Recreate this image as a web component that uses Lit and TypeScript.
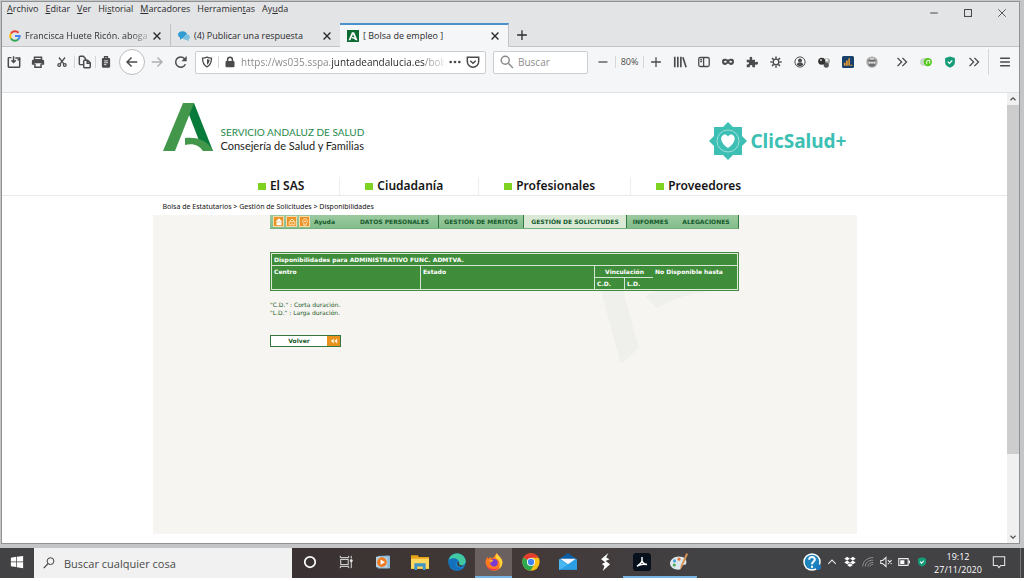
import { LitElement, html, css, svg } from "lit";
import { customElement } from "lit/decorators.js";
import { classMap } from "lit/directives/class-map.js";

const glyphs: Record<string, unknown> = {
  open: svg`<path d="M5 3H2.500a1 1 0 0 0-1 1v9a1 1 0 0 0 1 1h11a1 1 0 0 0 1-1V5.500H12" /><path d="M9.500 3.500h5v2M7.500 1.500V8M5 6l2.500 2.500L10 6" />`,
  print: svg`<path d="M4 2.500h8v3H4z" fill="none"/><path d="M2.500 5.500h11a1.500 1.500 0 0 1 1.500 1.500v4h-3v-1.500H4V11H1V7a1.500 1.500 0 0 1 1.500-1.500z" fill="currentColor" stroke="none"/><path d="M4.500 10v4h7v-4" />`,
  cut: svg`<path d="M4 2l6.500 8.500M12 2L5.500 10.500"/><circle cx="4.300" cy="12" r="1.800"/><circle cx="11.700" cy="12" r="1.800"/>`,
  copy: svg`<path d="M6 11H2.500a1 1 0 0 1-1-1V2.500a1 1 0 0 1 1-1H6l2.500 2.500v2"/><path d="M7.500 6h3.500l3 3v4.500a1 1 0 0 1-1 1H7.500a1 1 0 0 1-1-1V7a1 1 0 0 1 1-1zM10.500 6v3.500H14"/>`,
  paste: svg`<rect x="2.500" y="2.500" width="11" height="13" rx="1.500" fill="currentColor" stroke="none"/><path d="M6 3V1h4v2"/><path d="M5.500 6.500h5M5.500 9h5M5.500 11.500h3" stroke="#f5f6f7" stroke-width="1.200"/>`,
  back: svg`<path d="M14 8H2.500M7.500 2.800L2.300 8l5.200 5.200"/>`,
  forward: svg`<path d="M2 8h11.500M8.500 2.800L13.700 8l-5.200 5.200"/>`,
  reload: svg`<path d="M13 10.500A5.800 5.800 0 1 1 12 4.200"/><path d="M14.500 1v6h-6z" fill="currentColor" stroke="none"/>`,
  shield: svg`<path d="M8 1.500c2 1 4 1.300 6 1.300 0 5.700-1.500 9.700-6 11.700C3.500 12.500 2 8.500 2 2.800c2 0 4-.3 6-1.300z"/><path d="M8 4c1.200.6 2.300.9 3.500 1-.2 3-1 5-3.500 6.500z" fill="currentColor" stroke="none"/>`,
  lock: svg`<path d="M4.800 7V4.800a3.200 3.200 0 0 1 6.400 0V7" stroke-width="2"/><rect x="2" y="6.500" width="12" height="8.500" rx="1.500" fill="currentColor" stroke="none"/>`,
  dots: svg`<g fill="currentColor" stroke="none"><circle cx="2.200" cy="8" r="1.800"/><circle cx="8" cy="8" r="1.800"/><circle cx="13.800" cy="8" r="1.800"/></g>`,
  pocket: svg`<path d="M1.500 2.500h13v5a6.500 6.500 0 0 1-13 0z"/><path d="M4.800 6.500L8 9.500l3.200-3"/>`,
  search: svg`<circle cx="6" cy="6" r="4.600"/><path d="M9.500 9.500l5.300 5.300"/>`,
  minus: svg`<path d="M2 8h12"/>`,
  plus: svg`<path d="M1.500 8h13M8 1.500v13"/>`,
  library: svg`<path d="M2 2v12M5.500 2v12M9 2v12M11.300 2.500l3.700 11.500" stroke-width="1.900"/>`,
  sidebar: svg`<rect x="1" y="2" width="14" height="12" rx="2"/><path d="M7.500 2v12M3 5h2.500M3 7.500h2.500"/>`,
  mask: svg`<path fill-rule="evenodd" d="M0 7c0-3 2-3.500 4-3.500 2 0 2.500 1 4 1s2-1 4-1 4 .5 4 3.500c0 3.500-1.500 5-4 5-2 0-2.800-2-4-2s-2 2-4 2c-2.500 0-4-1.500-4-5zm2.300.7c1.200 1.600 3 1.600 4.200 0C5.500 6 3.500 6 2.300 7.700zm7.200 0c1.200 1.600 3 1.600 4.200 0C12.700 6 10.500 6 9.500 7.700z" fill="currentColor" stroke="none"/>`,
  puzzle: svg`<path d="M1 5h4.500C4 2.500 5 1 6.500 1S9 2.500 7.800 5H12v3.500c2-1.300 4-.7 4 1.200s-2 2.500-4 1.200V15H8.300c.8-2-.3-3-1.500-3s-2.300 1-1.500 3H1v-4c2 .7 3-.2 3-1.300S3 7.700 1 8.500z" fill="currentColor" stroke="none"/>`,
  gear: svg`<circle cx="8" cy="8" r="3.700"/><path d="M8 .5v3M8 12.500v3M.5 8h3M12.500 8h3M2.700 2.700l2.100 2.100M11.200 11.200l2.100 2.100M2.700 13.300l2.100-2.100M11.200 4.800l2.100-2.100" stroke-width="2"/>`,
  account: svg`<circle cx="8" cy="8" r="6.800" stroke-width="1.300"/><circle cx="8" cy="6" r="2.600" fill="currentColor" stroke="none"/><path d="M3.500 12c.5-2.500 2.200-3.200 4.500-3.200s4 .7 4.500 3.200c-3 2-6 2-9 0z" fill="currentColor" stroke="none"/>`,
  pearls: svg`<g stroke="none"><circle cx="12" cy="7" r="4" fill="#a9a9a9"/><circle cx="11" cy="12" r="3.500" fill="#555"/><circle cx="11.500" cy="5.500" r="1.700" fill="#f4f4f4"/><circle cx="5" cy="7" r="4.700" fill="#303030"/><circle cx="4" cy="5.500" r="1.400" fill="#bbb"/></g>`,
  chart: svg`<g stroke="none"><rect width="16" height="16" rx="2" fill="#17406b"/><path d="M2.500 9h2.200v4H2.500zM5.500 6h2.200v7H5.500zM8.500 3h2v10h-2zM11.300 11.500h2.500V13h-2.500z" fill="#f0a030"/></g>`,
  globe: svg`<g stroke="none"><circle cx="8" cy="8" r="7.500" fill="#a5a5a5"/><path d="M2 6q6-5 12 0-2 2-6 1-4 1-6-1zM3 12l2-2h6l2 2-3 2H6z" fill="#707070"/><path d="M4 8h2v2H4zM7 8h2v2H7zM10 8h2v2h-2zM5 3h6v1.500H5z" fill="#ececec"/></g>`,
  chevrons: svg`<path d="M2 2.500L7.500 8 2 13.500M8.500 2.500L14 8l-5.500 5.500" stroke-width="1.800"/>`,
  toggle: svg`<g stroke="none"><rect x="0" y="3" width="15" height="10" rx="5" fill="#c9d6c5"/><circle cx="10.500" cy="8" r="5.500" fill="#55c81c"/><path d="M9 11V6.500l4-1v4.500" stroke="#fff" stroke-width="1.300"/></g>`,
  guard: svg`<path d="M8 .5l6.500 2v6c0 3.500-3 5.500-6.500 7-3.500-1.500-6.500-3.500-6.500-7v-6z" fill="#169b78" stroke="none"/><path d="M5 7.500l2.300 2.300L11 6" stroke="#fff"/>`,
  burger: svg`<path d="M1.500 3h13M1.500 8h13M1.500 13h13" stroke-width="1.900"/>`,
  close: svg`<path d="M2.500 2.500l11 11M13.500 2.500l-11 11" stroke-width="2.200"/>`,
  winMin: svg`<path d="M2 8h12" stroke-width="1.500"/>`,
  winMax: svg`<rect x="2.500" y="2.500" width="11" height="11" stroke-width="1.500"/>`,
  winClose: svg`<path d="M2 2l12 12M14 2L2 14" stroke-width="1.300"/>`,
  google: svg`<g stroke-width="2.600"><path d="M12.700 3.700A6.300 6.300 0 0 0 2.600 4.800" stroke="#ea4335"/><path d="M2.600 4.800a6.300 6.300 0 0 0 0 6.400" stroke="#fbbc05"/><path d="M2.600 11.200a6.300 6.300 0 0 0 9.600 1.600" stroke="#34a853"/><path d="M12.200 12.800A6.300 6.300 0 0 0 14.300 8H8" stroke="#4285f4"/></g>`,
  chat: svg`<g stroke="none"><path d="M6 1.500c3.500 0 6 2 6 4.700S9.500 11 6 11l-3.500 2 .3-3C1 9 0 7.800 0 6.200 0 3.500 2.500 1.500 6 1.500z" fill="#2f9bd0"/><path d="M11 5.500c3 0 5 1.700 5 4 0 1.300-.7 2.300-2 3l.5 2.500-3-1.600c-2.500.1-4.500-1.200-5-3z" fill="#7cc0e0"/></g>`,
  junta: svg`<rect width="16" height="16" fill="#0b6b30" stroke="none"/><path d="M2 13.500L6.500 3h3L14 13.500h-2.500L8 5.500l-3.500 8z" fill="#fff" stroke="none"/><path d="M6.500 10c2 0 4 .8 5.500 3" stroke="#fff"/>`,
  windows: svg`<path d="M1 3l6-.9v5.400H1zM7.800 2L15 1v6.500H7.800zM1 8.300h6v5.500l-6-.9zM7.800 8.300H15V15l-7.200-1z" fill="#fff" stroke="none"/>`,
  lens: svg`<circle cx="10" cy="5.500" r="4.500" stroke-width="1.300"/><path d="M6.700 8.800L1 14.700" stroke-width="1.500"/>`,
  cortana: svg`<circle cx="8" cy="8" r="6" stroke="#fff" stroke-width="2"/>`,
  tasks: svg`<g stroke="#e5e5e5" stroke-width="1.100"><rect x="2" y="5" width="8.500" height="6"/><path d="M1.500 1v2h9.500V1M1.500 15v-2H11v2M14 1v3M14 8v7"/><path d="M13 5.500h2v2h-2z" fill="#fff"/></g>`,
  media: svg`<g stroke="none"><path d="M2 1l13-.5 1 1V15l-2 .5H2z" fill="#8fbbd9"/><path d="M0 2l13 .5v12L0 14z" fill="#b9d2e2"/><circle cx="6.800" cy="8.200" r="5.500" fill="#ec7a23"/><path d="M5.300 5.200l5 3-5 3z" fill="#fff"/></g>`,
  folder: svg`<g stroke="none"><path d="M0 2h6l1 1.500h9V14H0z" fill="#e8a317"/><path d="M0 5h16v9H0z" fill="#ffd75e"/><path d="M3 9h10v6h-2.500v-3h-5v3H3z" fill="#3f94c5"/></g>`,
  edge: svg`<g stroke="none"><circle cx="8" cy="8" r="7.800" fill="#1687d0"/><path d="M1 6C2-1 14-2 15.700 7c.3 3-4 5-6 3.300C11 7 8 5 5.300 5.200 3.500 5.300 2 5.500 1 6z" fill="#42c9a0"/><path d="M1 6c3-2.500 8-1.500 8 1.500-3 .5-3 4.500 1 5.700 2 .5 3.500 0 4.500-.7C10 18-1 16 1 6z" fill="#1470bd"/><path d="M9.500 7.500c-2 .5-1.800 4 1.500 4.700 1.500.2 3-.3 4-1-1 .1-4.500 0-5.300-1.500.3-.7.300-1.500-.2-2.200z" fill="#403a3b"/></g>`,
  firefox: svg`<g stroke="none"><path d="M.5 8C.5 6 1.300 4.500 2.500 3.500L3 5l2-1.500 1 1.300C8 4.500 8.500 2 10.500 0c.3 2 5 4 5 8.500a7.500 7.500 0 0 1-15-.5z" fill="#ff7a20"/><path d="M10.500 0c.3 2 5 4 5 8.500 0 2-1 4.500-3 5.500C14 9 12.500 6 9 4z" fill="#ffd43b"/><path d="M1 10c2 5 8 5 10.500 3C9 17 2.500 16 1 10z" fill="#f0305b"/><circle cx="8" cy="8.700" r="3.300" fill="#7b3ad0"/><path d="M3.500 6l4 .5c-.5 1.300-2 1-2 2.200C5 8 4 7.500 3.500 6z" fill="#ffb02e"/></g>`,
  chrome: svg`<g stroke="none"><circle cx="8" cy="8" r="7.700" fill="#fbc116"/><path d="M8 8L1.300 4.200A7.700 7.700 0 0 1 14.700 4.200H8z" fill="#e33b2e"/><path d="M1.300 4.200A7.700 7.700 0 0 0 7.500 15.700L11 9.700 8 8z" fill="#2da94f"/><circle cx="8" cy="8" r="3.600" fill="#fff"/><circle cx="8" cy="8" r="2.800" fill="#4285f4"/></g>`,
  mail: svg`<g stroke="none"><path d="M0 5.500L8 0l8 5.500z" fill="#0f5fa8"/><path d="M0 5.500h16V15H0z" fill="#2a9fe4"/><path d="M1 5h14L8 10z" fill="#f4f8fb"/><path d="M0 5.500l8 5L0 15z" fill="#49b8f0"/></g>`,
  bolt: svg`<path d="M11 0L4.500 5.500l3.700 2.700-3 1.500 2.300 1.800L6 16l6.500-6-4-3 3.500-1.500L9 4z" fill="#fff" stroke="none"/>`,
  acrobat: svg`<rect width="16" height="16" rx="3" fill="#06111d" stroke="none"/><path d="M8 3.500v3.800M8 7.300c-1 2-2.500 3.200-4.500 4.500M8 7.300c1 2 2.500 2.700 4.500 3M4 11.500c2-1.300 5-2 8-1.200" stroke="#fff" stroke-width="1.300"/>`,
  paint: svg`<g stroke="none"><path d="M8 3c4.500 0 7 2.500 6.500 6-.4 2-3 1-4 2.300-.8 1.500 0 3.500-3 3.500C3.500 14.800 0 12.500 0 9.300 0 5.500 4 3 8 3z" fill="#dde8ee"/><circle cx="4" cy="7" r="1.400" fill="#4b9fd8"/><circle cx="8" cy="5.500" r="1.400" fill="#e5793b"/><circle cx="3.800" cy="10.700" r="1.400" fill="#51aa57"/><path d="M14.500 0l1.500 1-5 11-2 3 .5-4z" fill="#d49351"/></g>`,
  help: svg`<g stroke="none"><circle cx="8" cy="8" r="7.800" fill="#fff"/><circle cx="8" cy="8" r="6.500" fill="#1e84bd"/></g><path d="M5.500 6c0-3.500 5.200-3.200 5 0C10.300 7.700 8 7.600 8 10M8 11.300v1.700" stroke="#fff" stroke-width="1.800"/><circle cx="13.500" cy="12.500" r="2.500" fill="#1679bf" stroke="none"/>`,
  up: svg`<path d="M2 11l6-6 6 6" stroke="#e8e8e8"/>`,
  dropbox: svg`<path d="M4.200 1L8 3.500 4.200 6 .4 3.500zM11.800 1l3.800 2.500L11.800 6 8 3.500zM4.200 6L8 8.500 4.200 11 .4 8.500zM11.800 6l3.800 2.500-3.800 2.500L8 8.500zM4.200 12L8 9.500l3.800 2.500L8 14.500z" fill="#fff" stroke="none"/>`,
  wifi: svg`<g stroke="#9a9a9a" stroke-width="1.200"><path d="M1 14C1 7 7 2 15 2M4.500 14c0-5 4-8.500 10.500-8.500M8 14c0-3 3-5.500 7-5.500M11 14c0-2 2-3 4-3"/></g>`,
  mute: svg`<path d="M1 6h2.500L8 2v12l-4.500-4H1zM10.500 5.500l5 5M15.500 5.500l-5 5" stroke="#e8e8e8" stroke-width="1.400"/>`,
  battery: svg`<path d="M1 3.500h12.500v9H1z" stroke="#eee" stroke-width="1.400"/><path d="M3 5.500h5.500v5H3zM14 6h1.800v4H14z" fill="#fff" stroke="none"/>`,
  notice: svg`<path d="M1.500 2h13v10H10l-2 2.500L6 12H1.500z" stroke="#e8e8e8" stroke-width="1.200"/>`,
  home: svg`<path d="M8 2l5.500 5.500h-11zM4 8.500h8V13H4z" fill="#fff" stroke="none"/>`,
  padlock: svg`<path d="M3.500 7.500h9v5h-9zM5.500 7V5q2.500-3 5 0v2M8 9v2" stroke="#fff2dc" stroke-width="1.300"/>`,
  bulb: svg`<path d="M6 10C2.500 7 4.500 3 8 3s5.500 4 2 7v3H6zM7 6l1 2 1-2" stroke="#fff2dc" stroke-width="1.400"/>`,
  scrollUp: svg`<path d="M3 10.500l5-5 5 5" stroke-width="2.400"/>`,
  scrollDown: svg`<path d="M3 5.500l5 5 5-5" stroke-width="2.400"/>`,
  rewind: svg`<path d="M7.500 4v8L3 8zM13 4v8L8.500 8z" fill="#fff3dd" stroke="none"/>`,
};

const icon = (name: string, size = "s12") =>
  html`<svg class="icon ${size}" viewBox="0 0 16 16" aria-hidden="true">${glyphs[name]}</svg>`;

const iconStyles = css`
  * { box-sizing: border-box; }
  .icon { display: block; flex: none; fill: none; stroke: currentColor; stroke-width: 1.7; }
  .s8 { width: 8px; height: 8px; }
  .s10 { width: 10px; height: 10px; }
  .s12 { width: 12px; height: 12px; }
  .s14 { width: 14px; height: 14px; }
  .s18 { width: 18px; height: 18px; }
  button { font: inherit; color: inherit; background: none; border: 0; padding: 0; margin: 0; }
  input { font: inherit; border: 0; outline: 0; padding: 0; margin: 0; min-width: 0; background: none; }
`;

@customElement("browser-chrome")
class BrowserChrome extends LitElement {
  static styles = [iconStyles, css`
    :host { display: block; background: #e3e4e6; color: #2b2b2d; font: 10px/14px "Open Sans", "Noto Sans", sans-serif; }
    .top { display: flex; justify-content: space-between; height: 21px; }
    .menus { display: flex; gap: 7px; padding-left: 5px; font-size: 9px; }
    .menus button { height: 14px; white-space: nowrap; }
    u { text-underline-offset: 1px; }
    .wins { display: flex; }
    .wins button { width: 34px; height: 21px; display: grid; place-items: center; color: #3a3a3a; }
    .tabs { display: flex; height: 24px; border-bottom: 1px solid #c4c4c6; }
    .tab { display: flex; align-items: center; flex: 0 1 169px; min-width: 0; padding: 0 8px 0 7px; gap: 4px; height: 24px; font-size: 9px; border-top: 2px solid transparent; }
    .first { border-right: 1px solid #c0c0c2; }
    .active { background: #f5f6f7; border-top-color: #4a90cc; border-right: 1px solid #c4c4c6; }
    .name { flex: 1; min-width: 0; white-space: nowrap; }
    .fade { background: linear-gradient(90deg, #2b2b2d 86%, #b9babc); -webkit-background-clip: text; background-clip: text; color: transparent; }
    .new { width: 26px; display: grid; place-items: center; }
    .bar { display: flex; align-items: center; height: 46px; padding: 0 2px 15px 0; background: #f5f6f7; border-bottom: 1px solid #e0e1e2; color: #4b4b4d; }
    .tool { width: 24px; height: 24px; flex: none; display: grid; place-items: center; }
    .narrow { width: 20px; }
    .sep { border-left: 1px solid #d5d6d8; height: 12px; flex: none; }
    .tall { height: 26px; margin: 0 4px 0 2px; }
    .round { width: 26px; height: 26px; border: 1px solid #bcbcbe; border-radius: 50%; background: #fff; margin: 0 0 0 3px; }
    .dim { color: #b0b0b2; }
    .box { display: flex; align-items: center; height: 23px; background: #fff; border: 1px solid #cccdcf; border-radius: 2px; }
    .url { flex: 1; min-width: 0; margin: 0 7px 0 2px; padding: 0 5px; gap: 5px; }
    .url input { flex: 1; height: 16px; -webkit-text-fill-color: transparent;
      background: linear-gradient(90deg, #858587 90px, #252527 90px 184px, #858587 184px, #ddd 204px);
      -webkit-background-clip: text; background-clip: text; }
    .find { width: 95px; padding: 0 6px; gap: 4px; margin-right: 3px; color: #8a8a8c; }
    .find input { flex: 1; }
    .find input::placeholder { color: #8d8d8f; opacity: 1; }
    .zoom { width: 27px; text-align: center; font-size: 9px; }
    .over { margin-left: 6px; }
  `];
  private menu(before: string, key: string, after: string) {
    return html`<button>${before}<u>${key}</u>${after}</button>`;
  }
  private tool(name: string, label: string, cls = "", size = "s12") {
    return html`<button class="tool ${cls}" aria-label=${label}>${icon(name, size)}</button>`;
  }
  private tab(glyph: string, name: string, kind: Record<string, boolean>) {
    return html`<div class=${classMap({ tab: true, ...kind })}>
      ${icon(glyph)}<span class=${classMap({ name: true, fade: !!kind.first })}>${name}</span>
      <button aria-label="Cerrar pestaña">${icon("close", "s10")}</button>
    </div>`;
  }
  render() {
    return html`
      <div class="top">
        <nav class="menus">
          ${this.menu("", "A", "rchivo")}${this.menu("", "E", "ditar")}${this.menu("", "V", "er")}
          ${this.menu("Hi", "s", "torial")}${this.menu("", "M", "arcadores")}
          ${this.menu("Herramien", "t", "as")}${this.menu("Ay", "u", "da")}
        </nav>
        <div class="wins">
          <button aria-label="Minimizar">${icon("winMin", "s10")}</button>
          <button aria-label="Maximizar">${icon("winMax", "s10")}</button>
          <button aria-label="Cerrar">${icon("winClose", "s10")}</button>
        </div>
      </div>
      <div class="tabs">
        ${this.tab("google", "Francisca Huete Ricón. abogad", { first: true })}
        ${this.tab("chat", "(4) Publicar una respuesta", {})}
        ${this.tab("junta", "[ Bolsa de empleo ]", { active: true })}
        <button class="new" aria-label="Nueva pestaña">${icon("plus")}</button>
      </div>
      <div class="bar">
        ${this.tool("open", "Abrir", "", "s14")}${this.tool("print", "Imprimir", "", "s14")}${this.tool("cut", "Cortar")}
        <span class="sep"></span>${this.tool("copy", "Copiar", "narrow", "s14")}
        <span class="sep"></span>${this.tool("paste", "Pegar", "narrow")}
        ${this.tool("back", "Atrás", "round", "s14")}${this.tool("forward", "Adelante", "dim", "s14")}${this.tool("reload", "Recargar", "", "s14")}
        <div class="box url">
          ${icon("shield")}<span class="sep"></span>${icon("lock")}
          <input aria-label="Dirección" value="https://ws035.sspa.juntadeandalucia.es/bols" />
          ${icon("dots", "s12")}${icon("pocket", "s14")}
        </div>
        <label class="box find">${icon("search", "s14")}<input aria-label="Buscar" placeholder="Buscar" /></label>
        ${this.tool("minus", "Reducir")}<span class="sep"></span><span class="zoom">80%</span><span class="sep"></span>${this.tool("plus", "Ampliar")}
        ${this.tool("library", "Catálogo", "", "s14")}${this.tool("sidebar", "Barra lateral")}${this.tool("mask", "Privado")}
        ${this.tool("puzzle", "Complementos")}${this.tool("gear", "Opciones")}${this.tool("account", "Cuenta")}
        ${this.tool("pearls", "Perlas")}${this.tool("chart", "Estadísticas")}${this.tool("globe", "Mundo")}
        ${this.tool("chevrons", "Más", "over")}${this.tool("toggle", "Activar")}${this.tool("guard", "Protección")}${this.tool("chevrons", "Más herramientas")}
        <span class="sep tall"></span>${this.tool("burger", "Menú")}
      </div>`;
  }
}

@customElement("health-page")
class HealthPage extends LitElement {
  static styles = [iconStyles, css`
    :host { display: flex; flex-direction: column; background: #fff; font-family: "Noto Sans", "Open Sans", sans-serif; color: #222; }
    .head { width: 100%; max-width: 704px; margin: 0 auto; padding: 10px 10px 0; height: 84px; display: flex; justify-content: space-between; align-items: flex-start; }
    .brand, .clic { display: flex; }
    .brand { gap: 8px; }
    .mark { width: 50px; height: 49px; }
    .words { padding-top: 22px; font: 11px/14px Lato, "Open Sans", sans-serif; }
    .service { color: #26894b; font-size: 10px; }
    .clic { align-items: center; gap: 3px; padding-top: 19px; color: #3dbfb4; font: bold 19px/38px "Noto Sans", sans-serif; text-decoration: none; }
    .star { width: 38px; height: 38px; }
    .sections { display: flex; justify-content: center; border-bottom: 1px solid #e9e9e9; height: 19px; }
    .sections a { display: flex; align-items: center; gap: 4px; padding: 0 35px 0 25px; color: #151515; text-decoration: none; font: 600 12px/16px "Noto Sans", sans-serif; border-right: 1px solid #eee; }
    .sections a:last-child { border-right: 0; }
    .sections a::before { content: ""; width: 8px; height: 7px; background: #7ed321; }
    .crumbs { width: 100%; max-width: 704px; margin: 0 auto; padding: 5px 10px 0; font-size: 7px; line-height: 12px; height: 19px; color: #111; }
    .panel { flex: 1; width: 100%; max-width: 704px; margin: 0 auto 9px; background: #f6f5f1; font: 6px/8px "DejaVu Sans", Verdana, sans-serif; color: #1d5a2a; }
    .inner { width: 469px; max-width: 100%; margin: 0 auto; }
    .menu { display: flex; height: 14px; background: linear-gradient(#9ccaa0, #83bd8b); border-bottom: 1px solid #74b07c; border-right: 1px solid #337a42; font-weight: bold; }
    .menu a { display: flex; align-items: center; justify-content: center; color: #155a2c; text-decoration: none; white-space: nowrap; }
    .quick { display: flex; align-items: center; gap: 2px; padding-left: 3px; width: 81px; }
    .quick a { padding-left: 2px; }
    .sq { width: 11px; height: 11px; display: grid; place-items: center; background: #ea9425; color: #fff; outline: 1px solid #f6d9a6; outline-offset: -1px; }
    .menu a.personal { width: 87px; }
    .menu a.merits { width: 85px; border-left: 1px solid #337a42; }
    .menu a.requests { width: 104px; background: #d9e9d6; border: 1px solid #337a42; border-width: 0 1px; }
    .menu a.reports { width: 47px; }
    .menu a.claims { flex: 1; }
    table { width: 100%; margin-top: 23px; border-collapse: separate; border-spacing: 0; table-layout: fixed; border: 1px solid #3f8a3b; background: #dcebd8; padding: 1px; color: #fff; }
    th { background: #3f8d3a; text-align: left; vertical-align: top; padding: 2px 1px 1px 2px; font-weight: bold; }
    th.title { border-bottom: 1px solid #d5e6d2; }
    th.edge { border-left: 1px solid #d5e6d2; }
    th.under { border-bottom: 1px solid #d5e6d2; text-align: center; }
    .c1 { width: 148px; } .c2 { width: 174px; } .c3 { width: 30px; } .c4 { width: 29px; }
    .foot { display: flex; justify-content: space-between; }
    .notes p { margin: 0; line-height: 8px; }
    .notes { padding-top: 10px; }
    .return { display: flex; width: 71px; height: 12px; margin-top: 18px; border: 1px solid #35763f; background: #fff; font-weight: bold; color: #1d5a2a; align-items: stretch; }
    .return span { flex: 1; line-height: 10px; text-align: center; }
    .return i { width: 13px; background: #e8921e; display: grid; place-items: center; }
    .shadow { width: 140px; height: 80px; }
  `];
  render() {
    return html`
      <header class="head">
        <div class="brand">
          <svg class="mark" viewBox="0 0 50 49" aria-hidden="true">
            <path d="M20 0h11l19 48H40L25 9z" fill="#087a39"/>
            <path d="M20 0h11L12 48H0z" fill="#43974a"/>
            <path d="M22 35c10-1 22 1 28 13H40c-4-6-10-8-18-6z" fill="#43974a"/>
          </svg>
          <div class="words"><div class="service">SERVICIO ANDALUZ DE SALUD</div><div>Consejería de Salud y Familias</div></div>
        </div>
        <a class="clic" href="#">
          <svg class="star" viewBox="0 0 38 38" aria-hidden="true">
            <path d="M5 5h28v28H5z" fill="#3dbfb4"/><path d="M19 0l19 19-19 19L0 19z" fill="#3dbfb4"/>
            <circle cx="19" cy="19" r="11" fill="none" stroke="#9fe0da" stroke-width="1"/>
            <path d="M19 26C9 19 12 12.500 16 12.500q2 0 3 2 1-2 3-2c4 0 7 6.500-3 13.500z" fill="#fff"/>
          </svg>ClicSalud+</a>
      </header>
      <nav class="sections"><a href="#">El SAS</a><a href="#">Ciudadanía</a><a href="#">Profesionales</a><a href="#">Proveedores</a></nav>
      <div class="crumbs">Bolsa de Estatutarios &gt; Gestión de Solicitudes &gt; Disponibilidades</div>
      <main class="panel"><div class="inner">
        <nav class="menu">
          <div class="quick"><button class="sq" aria-label="Inicio">${icon("home", "s10")}</button><button class="sq" aria-label="Acceso">${icon("padlock", "s10")}</button><button class="sq" aria-label="Consejos">${icon("bulb", "s10")}</button><a href="#">Ayuda</a></div>
          <a class="personal" href="#">DATOS PERSONALES</a><a class="merits" href="#">GESTIÓN DE MÉRITOS</a>
          <a class="requests" href="#">GESTIÓN DE SOLICITUDES</a><a class="reports" href="#">INFORMES</a><a class="claims" href="#">ALEGACIONES</a>
        </nav>
        <table>
          <colgroup><col class="c1" /><col class="c2" /><col class="c3" /><col class="c4" /><col /></colgroup>
          <thead>
            <tr><th class="title" colspan="5">Disponibilidades para ADMINISTRATIVO FUNC. ADMTVA.</th></tr>
            <tr><th rowspan="2">Centro</th><th class="edge" rowspan="2">Estado</th><th class="edge under" colspan="2">Vinculación</th><th rowspan="2">No Disponible hasta</th></tr>
            <tr><th class="edge">C.D.</th><th class="edge">L.D.</th></tr>
          </thead>
        </table>
        <div class="foot">
          <div class="notes"><p>"C.D." : Corta duración.</p><p>"L.D." : Larga duración.</p>
            <button class="return"><span>Volver</span><i>${icon("rewind", "s10")}</i></button></div>
          <svg class="shadow" viewBox="0 0 140 80" aria-hidden="true"><path d="M2 0h22l16 57-18 16zM46 5l10-5h56Q78 4 58 17z" fill="#eff0eb"/></svg>
        </div>
      </div></main>`;
  }
}

@customElement("task-bar")
class TaskBar extends LitElement {
  static styles = [iconStyles, css`
    :host { display: flex; height: 30px; background: #424143; color: #fff; font: 9px/13px "Open Sans", "Noto Sans", sans-serif; }
    .cell { width: 37px; flex: none; display: grid; place-items: center; border-bottom: 2px solid transparent; }
    .slim { width: 36px; }
    .start { width: 34px; }
    .apps { display: flex; background: linear-gradient(90deg, #3a3232, #433939 60%, #424143); }
    .run { border-bottom-color: #76b4e4; }
    .current { background: #6b6060; }
    .search { display: flex; align-items: center; gap: 9px; flex: 0 1 258px; min-width: 0; padding: 0 9px; background: #f1f1f1; color: #3b3b3b; font-size: 11px; }
    .search input { flex: 1; }
    .search input::placeholder { color: #4a4a4a; opacity: 1; }
    .tray { display: flex; margin-left: auto; padding-right: 7px; border-right: 1px solid #777; margin-right: 3px; }
    .small { width: 18px; }
    .info { width: 22px; }
    .time { width: 54px; text-align: center; padding-top: 2px; }
    .notice { width: 28px; }
  `];
  private cell(name: string, label: string, cls = "", size = "s18") {
    return html`<button class="cell ${cls}" aria-label=${label}>${icon(name, size)}</button>`;
  }
  render() {
    return html`
      ${this.cell("windows", "Inicio", "start", "s14")}
      <label class="search">${icon("lens", "s12")}<input aria-label="Buscar" placeholder="Buscar cualquier cosa" /></label>
      <div class="apps">
        ${this.cell("cortana", "Cortana", "slim", "s14")}${this.cell("tasks", "Vista de tareas", "slim", "s14")}
        ${this.cell("media", "Multimedia", "", "s14")}${this.cell("folder", "Archivos")}${this.cell("edge", "Edge")}
        ${this.cell("firefox", "Firefox", "run current")}${this.cell("chrome", "Chrome")}${this.cell("mail", "Correo")}
        ${this.cell("bolt", "Rayo")}${this.cell("acrobat", "Acrobat", "run")}${this.cell("paint", "Paint", "run")}
      </div>
      <div class="tray">
        ${this.cell("help", "Ayuda", "info")}${this.cell("up", "Mostrar iconos", "small", "s10")}${this.cell("dropbox", "Dropbox", "small", "s12")}
        ${this.cell("wifi", "Red", "small", "s12")}${this.cell("mute", "Volumen", "small", "s12")}${this.cell("battery", "Batería", "small", "s12")}
        ${this.cell("guard", "Seguridad", "small", "s10")}
        <div class="time">19:12<br />27/11/2020</div>${this.cell("notice", "Notificaciones", "notice", "s14")}
      </div>`;
  }
}

@customElement("app-root")
class AppRoot extends LitElement {
  static styles = [iconStyles, css`
    :host { box-sizing: border-box; display: flex; flex-direction: column; min-height: 100vh; background: linear-gradient(#fff, #fff) bottom / 100% 3px no-repeat #c4c5c6; padding-bottom: 3px; }
    .window { flex: 1; display: flex; flex-direction: column; margin: 2px 4px 4px 1px; border: 1px solid #8f9192; border-top: 0; box-shadow: 0 -1px #8f9192; }
    .view { flex: 1; display: flex; }
    health-page { flex: 1; min-width: 0; }
    .scroll { width: 12px; background: #f0f0f0; display: flex; flex-direction: column; color: #505050; }
    .scroll button { height: 12px; display: grid; place-items: center; }
    .track { flex: 1; }
    .thumb { height: 82%; background: #cdcdcd; }
  `];
  render() {
    return html`
      <div class="window">
        <browser-chrome></browser-chrome>
        <div class="view">
          <health-page></health-page>
          <div class="scroll"><button aria-label="Subir">${icon("scrollUp", "s8")}</button><div class="track"><div class="thumb"></div></div><button aria-label="Bajar">${icon("scrollDown", "s8")}</button></div>
        </div>
      </div>
      <task-bar></task-bar>`;
  }
}
